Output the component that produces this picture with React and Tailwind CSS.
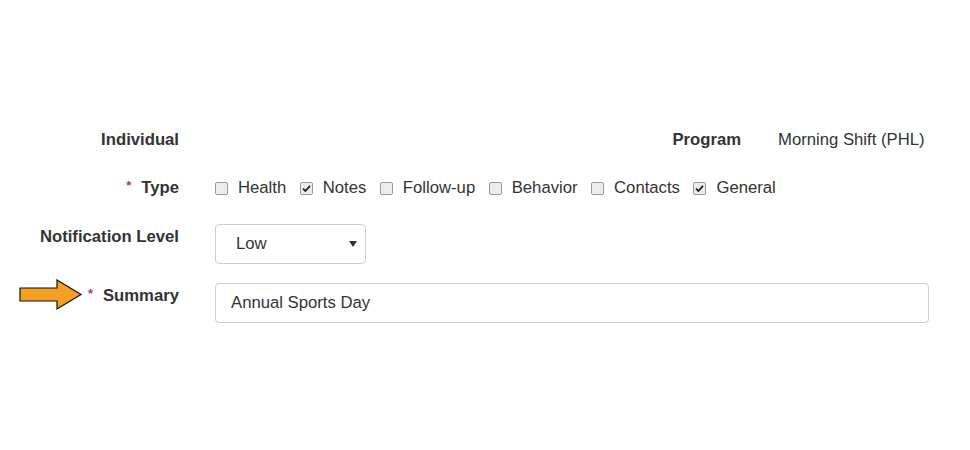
import React from 'react';

const types = [
  { name: 'Health', checked: false },
  { name: 'Notes', checked: true },
  { name: 'Follow-up', checked: false },
  { name: 'Behavior', checked: false },
  { name: 'Contacts', checked: false },
  { name: 'General', checked: true },
];

function Box({ checked }) {
  return (
    <span className="w-[13px] h-[13px] rounded-[2px] border border-[#9a9a9a] bg-[#ececec] flex items-center justify-center shrink-0">
      {checked && (
        <svg width="9" height="9" viewBox="0 0 9 9">
          <path d="M1 4.6 L3.4 7 L8 1.8" fill="none" stroke="#222" strokeWidth="1.8" />
        </svg>
      )}
    </span>
  );
}

function Arrow() {
  return (
    <svg width="64" height="32" viewBox="0 0 64 32" className="absolute left-[19px] top-[-4px]">
      <path
        d="M1 9 H38 V1 L62 15.5 L38 30 V22 H1 Z"
        fill="#f4a024"
        stroke="#111"
        strokeWidth="1.2"
        strokeLinejoin="miter"
      />
    </svg>
  );
}

export default function App() {
  return (
    <div className="w-[970px] h-[450px] bg-white text-[#333] text-[16.7px] font-['Liberation_Sans',Arial,sans-serif] pt-[128px]">
      <div className="flex flex-col">
        <div className="flex items-center h-[24px]">
          <div className="w-[179px] text-right font-bold">Individual</div>
          <div className="w-[382px]" />
          <div className="w-[180px] text-right font-bold">Program</div>
          <div className="pl-[37px]">Morning Shift (PHL)</div>
        </div>

        <div className="flex items-center h-[24px] mt-[24px]">
          <div className="w-[179px] text-right font-bold">
            <span className="text-[#a94442] text-[13px] relative top-[-3px] mr-[10px]">*</span>Type
          </div>
          <div className="flex items-center pl-[36px] gap-[13.5px]">
            {types.map(t => (
              <label key={t.name} className="flex items-center gap-[10px]">
                <Box checked={t.checked} />
                <span>{t.name}</span>
              </label>
            ))}
          </div>
        </div>

        <div className="flex items-start mt-[24px]">
          <div className="w-[179px] text-right font-bold">Notification Level</div>
          <div className="pl-[36px]">
            <div className="w-[151px] h-[40px] border border-[#ccc] rounded-[4px] flex items-center justify-between pl-[20px] pr-[8px]">
              <span>Low</span>
              <svg width="8" height="6" viewBox="0 0 8 6">
                <path d="M0 0 H8 L4 6 Z" fill="#333" />
              </svg>
            </div>
          </div>
        </div>

        <div className="flex items-start mt-[19px]">
          <div className="relative w-[179px] text-right font-bold">
            <Arrow />
            <span className="text-[#a94442] text-[13px] relative top-[-3px] mr-[10px]">*</span>Summary
          </div>
          <div className="pl-[36px]">
            <div className="w-[714px] h-[40px] border border-[#ccc] rounded-[4px] flex items-center pl-[15px]">
              Annual Sports Day
            </div>
          </div>
        </div>
      </div>
    </div>
  );
}
